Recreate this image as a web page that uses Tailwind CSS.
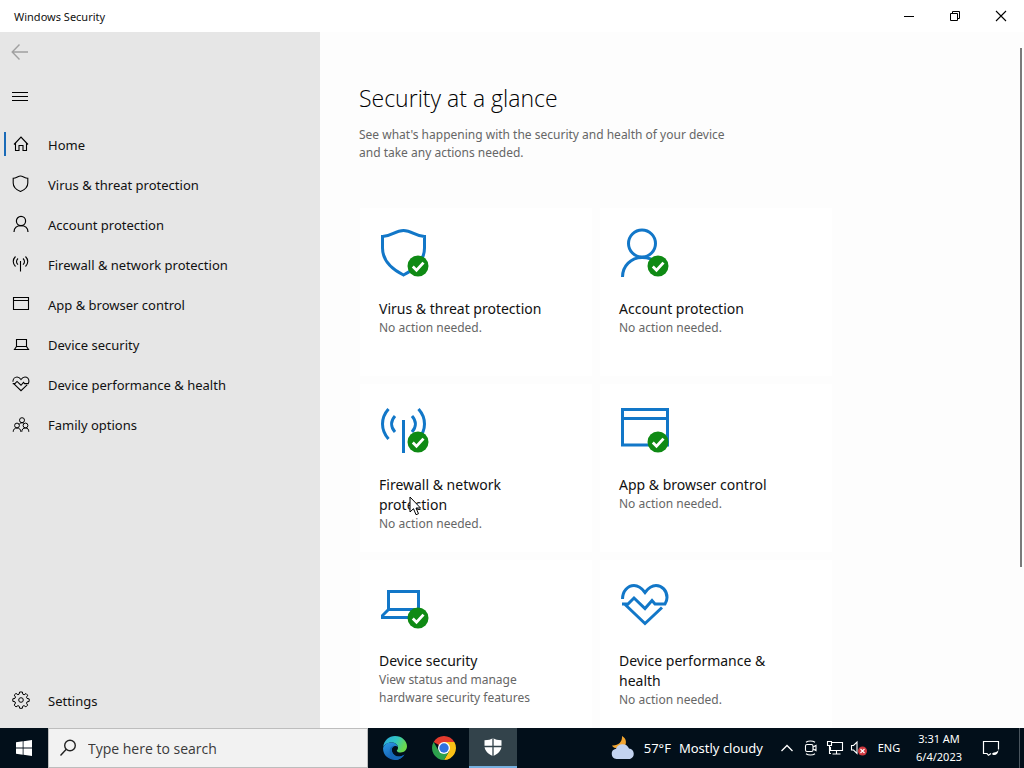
<!DOCTYPE html>
<html lang="en">
<head>
<meta charset="utf-8">
<meta name="viewport" content="width=device-width, initial-scale=1">
<title>Windows Security</title>
<script src="https://cdn.jsdelivr.net/npm/@tailwindcss/browser@4"></script>
</head>
<body class="relative flex h-screen flex-col overflow-hidden bg-[#fdfdfd] font-['Noto_Sans','Open_Sans',sans-serif] text-[#111]">

<svg class="hidden" aria-hidden="true">
  <symbol id="ok" viewBox="0 0 22 22">
    <circle cx="11" cy="11" r="10.5" fill="#0f8a14"/>
    <path d="M5.800 11.600l3.700 3.600 7-7.600" fill="none" stroke="#fff" stroke-width="2.800"/>
  </symbol>
</svg>

<header class="flex h-8 shrink-0 items-center justify-between bg-white">
  <h1 class="pl-3.5 pt-0.5 text-[11px]">Windows Security</h1>
  <div class="flex h-full">
    <button aria-label="Minimize" class="flex w-[46px] items-center justify-center"><svg width="12" height="12" fill="none" stroke="#000"><path d="M1 6.500h10"/></svg></button>
    <button aria-label="Restore" class="flex w-[46px] items-center justify-center"><svg width="12" height="12" fill="none" stroke="#000"><path d="M1.500 3.500h7v7h-7zM3.500 3.500v-2h7v7h-2"/></svg></button>
    <button aria-label="Close" class="flex w-[46px] items-center justify-center"><svg width="12" height="12" fill="none" stroke="#000" stroke-width="1.100"><path d="M1 1l10 10M11 1L1 11"/></svg></button>
  </div>
</header>

<div class="flex min-h-0 flex-1">
  <aside class="flex w-80 shrink-0 flex-col bg-[#e6e6e6] text-[13px]">
    <button aria-label="Back" class="flex h-10 w-10 items-center justify-center"><svg width="18" height="18" fill="none" stroke="#a0a0a0" stroke-width="1.400"><path d="M17 9H1.500M8.500 1.500L1.200 9l7.300 7.500"/></svg></button>
    <button aria-label="Menu" class="flex h-[50px] w-10 items-center justify-center"><svg width="16" height="10" stroke="#000"><path d="M0 .5h16M0 4.500h16M0 8.500h16"/></svg></button>
    <nav class="flex flex-col pt-0.5">
      <a href="#" aria-current="page" class="flex h-10 items-center pl-1"><span class="h-6 w-0.5 bg-[#1a6bb8]"></span>
        <svg class="ml-1.5 mr-[18px]" width="18" height="18" fill="none" stroke="#000" stroke-width="1.100"><path d="M2 9.500L9 2l7 7.500M3.500 8.200v7.300h3.500v-5h4v5h3.500V8.200"/></svg><span class="pt-[3px]">Home</span></a>
      <a href="#" class="flex h-10 items-center gap-[18px] pl-3"><svg width="18" height="18" fill="none" stroke="#000" stroke-width="1.100"><path d="M1.200 3.300C4.500 3.300 6 1 8.500 1s4 2.300 7.300 2.300V8c0 4-3 6.800-7.300 8.500C4.200 14.800 1.200 12 1.200 8z"/></svg><span class="pt-[3px]">Virus &amp; threat protection</span></a>
      <a href="#" class="flex h-10 items-center gap-[18px] pl-3"><svg width="18" height="18" fill="none" stroke="#000" stroke-width="1.200"><circle cx="9" cy="6" r="4.600"/><path d="M2 17c0-4 3-6.400 7-6.400s7 2.400 7 6.400"/></svg><span class="pt-[3px]">Account protection</span></a>
      <a href="#" class="flex h-10 items-center gap-[18px] pl-3"><svg width="18" height="18" fill="none" stroke="#000" stroke-width="1.100"><path d="M8.500 6v10.500M3.500 1.500c-3 3-3 7 0 10M13.500 1.500c3 3 3 7 0 10M6 3.500c-2 2-2 4.300 0 6.200M11 3.500c2 2 2 4.300 0 6.200"/></svg><span class="pt-[3px]">Firewall &amp; network protection</span></a>
      <a href="#" class="flex h-10 items-center gap-[18px] pl-3"><svg width="18" height="18" fill="none" stroke="#000" stroke-width="1.100"><path d="M1.500 2.500h15v12h-15zM1.500 5.500h15"/></svg><span class="pt-[3px]">App &amp; browser control</span></a>
      <a href="#" class="flex h-10 items-center gap-[18px] pl-3"><svg width="18" height="18" fill="none" stroke="#000" stroke-width="1.100"><path d="M4.500 11.500v-7h10v7zL2.500 14.500h14l-2-3"/></svg><span class="pt-[3px]">Device security</span></a>
      <a href="#" class="flex h-10 items-center gap-[18px] pl-3"><svg width="18" height="18" viewBox="0 0 50 50" fill="none" stroke="#000" stroke-width="3"><path d="M2.500 19C2.500 11 8 5.500 14 5.500c5 0 8 3 11 7 3-4 6-7 11-7 6 0 11 5 11 12 0 3-1 5-2 6.500H35L32 20.500l-7 8L14 18l-6 6H2M4 23.500L25 43.500l17-16"/></svg><span class="pt-[3px]">Device performance &amp; health</span></a>
      <a href="#" class="flex h-10 items-center gap-[18px] pl-3"><svg width="18" height="18" fill="none" stroke="#000"><circle cx="10" cy="5.200" r="2.500"/><circle cx="5" cy="10.500" r="2.400"/><circle cx="13.500" cy="10.500" r="2.400"/><path d="M1.200 16.800c0-2.500 1.500-3.800 3.800-3.800s3.800 1.300 3.800 3.800M9.800 16.800c0-2.500 1.400-3.800 3.700-3.800s3.300 1.300 3.300 3.800M7 9.500c.5-1 1.500-1.700 3-1.700s1.500.3 2 .7"/></svg><span class="pt-[3px]">Family options</span></a>
    </nav>
    <a href="#" class="mb-2 mt-auto flex h-10 items-center gap-[18px] pl-3"><svg width="18" height="18" viewBox="0 0 18 18" fill="none" stroke="#000"><circle cx="9" cy="9" r="2.300"/><path d="M7.600 1h2.800l.4 2.200 1.300.6 1.900-1.300 1.700 1.700-1.200 2 .5 1.200 2.200.5v2.500l-2.200.5-.5 1.300 1.200 1.900-1.800 1.800-1.900-1.300-1.300.6-.4 2.100H7.700l-.5-2.100-1.200-.6-2 1.300-1.800-1.800L3.500 12 3 10.800.8 10.300V7.800L3 7.300l.5-1.300-1.300-1.900L4 2.400l1.900 1.300 1.200-.5z"/></svg><span class="pt-[3px]">Settings</span></a>
  </aside>

  <main class="relative min-w-0 flex-1 overflow-hidden pl-[39px] pt-[50px]">
    <h2 class="font-['Open_Sans',sans-serif] text-[23px] font-light leading-8 text-black">Security at a glance</h2>
    <p class="mt-3 max-w-[400px] text-xs leading-[18px] text-[#666]">See what's happening with the security and health of your device<br>and take any actions needed.</p>
    <div class="mt-[46px] grid auto-rows-[168px] grid-cols-[232px_232px] gap-2 pl-px">
      <a href="#" class="bg-white pl-[19px] pt-5">
        <svg class="ml-px" width="50" height="50" fill="none" stroke="#1277c8" stroke-width="3"><path d="M2.500 8.500C12 8 15 2.500 23.500 2.500S35 8 44.500 8.500V20c0 13-9 21-21 27C11.500 41 2.500 33 2.500 20z"/><use href="#ok" x="27" y="27" width="22" height="22" stroke="none"/></svg>
        <h3 class="mt-[21px] text-sm leading-5">Virus &amp; threat protection</h3>
        <p class="text-xs leading-[18px] text-[#666]">No action needed.</p>
      </a>
      <a href="#" class="bg-white pl-[19px] pt-5">
        <svg class="ml-px" width="50" height="50" fill="none" stroke="#1277c8" stroke-width="3"><circle cx="22" cy="15.500" r="13.500"/><path d="M2.500 49C2.500 38 11 29.500 22 29.500c6 0 11 1.500 15 5.500"/><use href="#ok" x="27" y="27" width="22" height="22" stroke="none"/></svg>
        <h3 class="mt-[21px] text-sm leading-5">Account protection</h3>
        <p class="text-xs leading-[18px] text-[#666]">No action needed.</p>
      </a>
      <a href="#" class="bg-white pl-[19px] pt-5">
        <svg class="ml-px" width="50" height="50" fill="none" stroke="#1277c8" stroke-width="3"><path d="M23.500 16v33M8.500 5c-8 9-8 21 0 30M38.500 5c8 9 8 21 0 30M15 12c-4.500 5-4.500 11 0 16M32 12c4.500 5 4.500 11 0 16"/><use href="#ok" x="27" y="27" width="22" height="22" stroke="none"/></svg>
        <h3 class="mt-[21px] text-sm leading-5">Firewall &amp; network<br>protection</h3>
        <p class="text-xs leading-[18px] text-[#666]">No action needed.</p>
      </a>
      <a href="#" class="bg-white pl-[19px] pt-5">
        <svg class="ml-px" width="50" height="50" fill="none" stroke="#1277c8" stroke-width="3"><path d="M2.500 5.500h45v35.500h-45zM2.500 14.500h45"/><use href="#ok" x="27" y="27" width="22" height="22" stroke="none"/></svg>
        <h3 class="mt-[21px] text-sm leading-5">App &amp; browser control</h3>
        <p class="text-xs leading-[18px] text-[#666]">No action needed.</p>
      </a>
      <a href="#" class="bg-white pl-[19px] pt-5">
        <svg class="ml-px" width="50" height="50" fill="none" stroke="#1277c8" stroke-width="3"><path d="M8.500 29.500v-18h30v18zL2.500 35.500v2H40"/><use href="#ok" x="27" y="27" width="22" height="22" stroke="none"/></svg>
        <h3 class="mt-[21px] text-sm leading-5">Device security</h3>
        <p class="text-xs leading-[18px] text-[#666]">View status and manage<br>hardware security features</p>
      </a>
      <a href="#" class="bg-white pl-[19px] pt-5">
        <svg class="ml-px" width="50" height="50" fill="none" stroke="#1277c8" stroke-width="3"><path d="M2.500 19C2.500 11 8 5.500 14 5.500c5 0 8 3 11 7 3-4 6-7 11-7 6 0 11 5 11 12 0 3-1 5-2 6.500H35L32 20.500l-7 8L14 18l-6 6H2M4 23.500L25 43.500l17-16"/></svg>
        <h3 class="mt-[21px] text-sm leading-5">Device performance &amp;<br>health</h3>
        <p class="text-xs leading-[18px] text-[#666]">No action needed.</p>
      </a>
    </div>
    <div class="absolute right-0.5 top-4 h-[519px] w-0.5 bg-[#7a7a7a]"></div>
  </main>
</div>

<footer class="flex h-10 shrink-0 items-stretch bg-[#020f1a] text-white">
  <button aria-label="Start" class="flex w-12 items-center justify-center"><svg width="16" height="16" fill="#fff"><path d="M0 2.300L6.700 1.300v6.300H0zM7.500 1.200L16 0v7.600H7.500zM0 8.400h6.700v6.300L0 13.700zM7.500 8.400H16V16l-8.500-1.200z"/></svg></button>
  <label class="flex w-80 items-center border border-[#bdbdbd] bg-[#f2f2f2] pl-2.5">
    <svg width="18" height="18" fill="none" stroke="#222" stroke-width="1.400"><circle cx="11" cy="6.500" r="5.300"/><path d="M7.300 10.300L1.500 16.500"/></svg>
    <input type="text" aria-label="Search" placeholder="Type here to search" class="ml-[11px] min-w-0 flex-1 bg-transparent pt-0.5 font-['Open_Sans',sans-serif] text-sm text-[#3a3a3a] outline-none placeholder:text-[#3a3a3a]">
  </label>
  <button aria-label="Microsoft Edge" class="ml-[3px] flex w-12 items-center justify-center">
    <svg width="24" height="24" viewBox="0 0 24 24"><defs><linearGradient id="eg" x1="0" y1="0" x2="1" y2=".4"><stop offset="0" stop-color="#2aa5e0"/><stop offset=".55" stop-color="#31c6c2"/><stop offset="1" stop-color="#6bd84b"/></linearGradient><linearGradient id="eb" x1="0" y1="0" x2=".6" y2="1"><stop offset="0" stop-color="#2b9be8"/><stop offset="1" stop-color="#1256a8"/></linearGradient></defs>
    <path d="M.2 11C.8 4.500 6 0 12 0c7 0 12 5 12 10.300 0 3.700-2.800 6.200-6.200 6.200-2.600 0-4-1-4-1.800 0-.7 1.200-1.200 1.200-3C15 8.500 12 6.500 8.500 6.500 4 6.500 1.200 9 .2 11z" fill="url(#eg)"/><path d="M.1 12C1 8.500 4.500 6.500 8.500 6.500c3.200 0 6 1.800 6.400 4.500-.8-.9-2-1.300-3-1-2.500.5-3.700 3-3 5.700C9.700 19 13 21 16.500 20.500c2-.3 3.500-1 5-2C19.500 22 16 24 12 24 5.500 24-.4 19 .1 12z" fill="url(#eb)"/><path d="M6.700 15c0-3 1.500-4.800 4.300-5.200-1.800.9-2.500 3.300-1.900 5.700.8 3 4 5.300 7.400 5 2-.2 3.500-1 5-2C19 22.500 15.500 24 12 24c-3-1-5.300-4.500-5.300-9z" fill="#1467b5"/></svg></button>
  <button aria-label="Google Chrome" class="flex w-[50px] items-center justify-center">
    <svg width="24" height="24" viewBox="0 0 24 24"><path d="M12 12L1.610 6A12 12 0 0 1 22.390 6H12z" fill="#e33b2e"/><path d="M12 6h10.390A12 12 0 0 1 12 24l5.200-9z" fill="#fbc116"/><path d="M12 24A12 12 0 0 1 1.610 6l5.200 9 5.190 3 5.200-3z" fill="#2da14c"/><circle cx="12" cy="12" r="6" fill="#fff"/><circle cx="12" cy="12" r="4.700" fill="#2f72e0"/></svg></button>
  <button aria-label="Windows Security" class="flex w-12 items-center justify-center border-b-2 border-[#76b0e0] bg-[#33434b]">
    <svg width="18" height="18"><path d="M9 0c2 1.500 5 2.200 8.500 2.200V8c0 4.500-3.500 8-8.500 10C4 16 .5 12.500.5 8V2.200C4 2.200 7 1.500 9 0z" fill="#fff"/><path d="M9 0v18M0 8.500h18" stroke="#33434b" stroke-width="1.300"/></svg></button>
  <div class="ml-auto flex items-stretch">
    <button class="flex items-center gap-2 pr-3 text-[13px]"><svg width="25" height="24" viewBox="0 0 25 24"><path d="M11 0c4 2 5.500 7 2 11.500L4 12c-1.500-.5-2.500-1.500-3-2.500C7 10 11.500 6 11 0z" fill="#f2a531"/><path d="M5.500 23a5.200 5.200 0 0 1-.5-10.300A7 7 0 0 1 18 12.500 5.400 5.400 0 0 1 19 23z" fill="#c3d3f0"/></svg><span class="pt-0.5">57°F</span><span class="pt-0.5">Mostly cloudy</span></button>
    <button aria-label="Show hidden icons" class="flex w-6 items-center justify-center"><svg width="14" height="8" fill="none" stroke="#fff" stroke-width="1.300"><path d="M1.500 7L7 1.500 12.500 7"/></svg></button>
    <button aria-label="Meet now" class="flex w-6 items-center justify-center"><svg width="14" height="16" fill="none" stroke="#fff" stroke-width="1.100"><rect x="1.500" y="4.500" width="7.500" height="7" rx="1.500"/><path d="M9 7l3-1.500v5L9 9M2 2.300c2.500-1.800 6.500-1.800 9 0M2 13.700c2.500 1.800 6.500 1.800 9 0"/></svg></button>
    <button aria-label="Network" class="flex w-6 items-center justify-center"><svg width="18" height="16" fill="none" stroke="#fff" stroke-width="1.100"><path d="M6 2.500h10.500v8H4.500V7M10.500 10.500v3M6.500 14h8M1.500 1.500H5.500v4h-4zM3.500 5.500V13.500H5"/></svg></button>
    <button aria-label="Volume muted" class="flex w-6 items-center justify-center"><svg width="18" height="18" fill="none" stroke="#fff" stroke-width="1.100"><path d="M1.500 6.500h2L7 3v11.500L3.500 11h-2z"/><circle cx="12.500" cy="12" r="4.500" fill="#d0383f" stroke="none"/><path d="M10.500 10l4 4M14.500 10l-4 4"/></svg></button>
    <button class="w-9 text-[11px]">ENG</button>
    <button class="w-16 text-[11px] leading-[18px]">3:31 AM<br>6/4/2023</button>
    <button aria-label="Notifications" class="flex w-10 items-center justify-center"><svg width="18" height="18" fill="none" stroke="#fff" stroke-width="1.200"><path d="M9 14.500l-2.500 1.800L5 14.500H1.500v-12h15v8"/><path d="M16.500 11c-.5 4-2.500 5.500-5 5-2-.5-1.500-2.300.5-2.500 2-.2 3.500-1 4.500-2.500z" fill="#fff" stroke="none"/></svg></button>
    <button aria-label="Show desktop" class="ml-2 w-[5px] border-l border-[#4a555e]"></button>
  </div>
</footer>

<svg class="absolute left-[409px] top-[496px]" aria-hidden="true" width="13" height="20"><path d="M1 1v15l3.500-3.300 2.500 6 2.500-1-2.500-5.700h4.500z" fill="#fff" stroke="#000"/></svg>
</body>
</html>
